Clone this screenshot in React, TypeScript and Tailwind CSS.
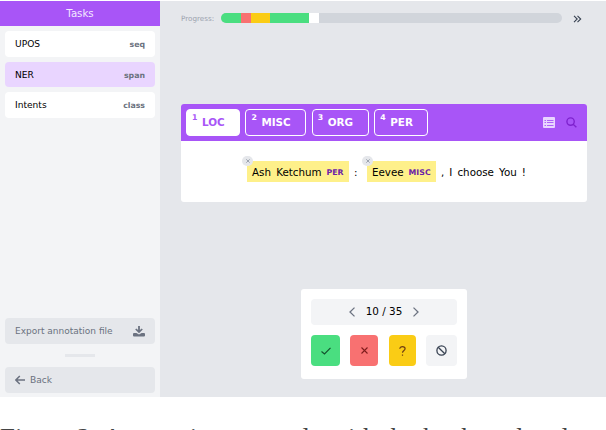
import React from "react";

const tasks = [
    { name: "UPOS", type: "seq", active: false },
    { name: "NER", type: "span", active: true },
    { name: "Intents", type: "class", active: false },
];

const labels = [
    { key: 1, name: "LOC", size: "w-[54px]", active: true },
    { key: 2, name: "MISC", size: "w-[61px]", active: false },
    { key: 3, name: "ORG", size: "w-[57px]", active: false },
    { key: 4, name: "PER", size: "w-[54px]", active: false },
];

function Sidebar() {
    return (
        <aside className="w-[160px] shrink-0 bg-[#f3f4f6] flex flex-col">
            <h1 className="h-[25px] bg-[#a855f7] text-[#f3e8ff] text-[10.2px] leading-[25px] text-center">Tasks</h1>
            <ul className="px-[5px] pt-[5px] flex flex-col gap-[5px]">
                {tasks.map((task) => (
                    <li
                        key={task.name}
                        className={`h-[25.6px] px-[10px] pt-[2px] rounded-[4px] flex items-center justify-between text-[9.1px] ${
                            task.active ? "bg-[#e9d5ff]" : "bg-white"
                        }`}
                    >
                        <span>{task.name}</span>
                        <span className="text-[7.8px] font-bold text-[#6b7280]">{task.type}</span>
                    </li>
                ))}
            </ul>
            <div className="mt-auto px-[5px] pb-[4px] flex flex-col items-center text-[9.1px] text-[#6b7280]">
                <button className="w-full h-[26px] px-[10px] rounded-[4px] bg-[#e5e7eb] flex items-center justify-between">
                    <span className="pt-[2px] text-[9px]">Export annotation file</span>
                    <svg className="w-[12px] h-[12px]" viewBox="0 0 12 12" fill="currentColor">
                        <path d="M5.1 1h1.8v4l1.8-1.5 1.1 1L6 8.2 2.2 4.5l1.1-1L5.1 5z" />
                        <path d="M1 8h2.4L6 9.6 8.6 8H11q1 0 1 1v1.5q0 1-1 1H1q-1 0-1-1V9q0-1 1-1z" />
                    </svg>
                </button>
                <div className="w-[30px] h-[3px] my-[10px] bg-[#e5e7eb]" />
                <button className="w-full h-[26px] px-[10px] rounded-[4px] bg-[#e5e7eb] flex items-center gap-[5px]">
                    <svg className="w-[10px] h-[10px]" viewBox="0 0 10 10" fill="none" stroke="currentColor" strokeWidth="1.5">
                        <path d="M4.8 1L.9 5l3.9 4M1 5h9" />
                    </svg>
                    <span className="pt-[2px]">Back</span>
                </button>
            </div>
        </aside>
    );
}

function Progress() {
    return (
        <div className="h-[34px] pl-[21px] flex items-center">
            <span className="w-[40px] pt-[2px] text-[7.2px] text-[#9ca3af]">Progress:</span>
            <div className="w-[341px] h-[10px] rounded-full overflow-hidden bg-[#d1d5db] flex">
                <div className="w-[20px] bg-[#4ade80]" />
                <div className="w-[10px] bg-[#f87171]" />
                <div className="w-[19px] bg-[#facc15]" />
                <div className="w-[39px] bg-[#4ade80]" />
                <div className="w-[10px] bg-white" />
            </div>
            <svg className="ml-[11px] mt-[1px] w-[9px] h-[8px] text-[#374151]" viewBox="0 0 9 8" fill="none" stroke="currentColor" strokeWidth="1.1">
                <path d="M1 .8L4.2 4 1 7.2M4.5.8L7.7 4 4.5 7.2" />
            </svg>
        </div>
    );
}

function LabelBar() {
    return (
        <div className="h-[37px] pl-[5px] pr-[10px] bg-[#a855f7] flex items-center text-white">
            <div className="flex gap-[5.4px]">
                {labels.map((label) => (
                    <button
                        key={label.name}
                        className={`h-[27px] pl-[5px] rounded-[4px] border border-white flex gap-[5px] font-bold ${label.size} ${
                            label.active ? "bg-white text-[#a855f7]" : ""
                        }`}
                    >
                        <span className="w-[5px] pt-[3px] text-[7.8px] leading-[10px]">{label.key}</span>
                        <span className="text-[10.4px] leading-[25px]">{label.name}</span>
                    </button>
                ))}
            </div>
            <svg className="ml-auto w-[12px] h-[11px] text-[#e9d5ff]" viewBox="0 0 12 11">
                <rect width="12" height="11" rx="1" fill="currentColor" />
                <path className="stroke-[#a855f7]" d="M1.5 3.5H3M4 3.5h6.5M1.5 5.5H3M4 5.5h6.5M1.5 8.5H3M4 8.5h6.5" strokeWidth=".9" />
            </svg>
            <svg className="ml-[11px] w-[11px] h-[11px] text-[#7e22ce]" viewBox="0 0 12 12" fill="none" stroke="currentColor" strokeWidth="1.5">
                <circle cx="5" cy="5" r="4" />
                <path d="M7.8 7.8L11.3 11.3" />
            </svg>
        </div>
    );
}

function Entity({ text, label, className }: { text: string; label: string; className: string }) {
    return (
        <span className={`relative h-[21px] pl-[5px] bg-[#fef08a] flex items-center gap-[5px] ${className}`}>
            <span className="pt-[2px]">{text}</span>
            <span className="pt-[2px] text-[7.8px] font-bold text-[#6b21a8]">{label}</span>
            <span className="absolute -left-[5px] -top-[5px] w-[11px] h-[10px] rounded-full bg-[#e5e7eb] text-[#9ca3af] flex items-center justify-center">
                <svg className="w-[4px] h-[4px]" viewBox="0 0 4 4" stroke="currentColor" strokeWidth="1">
                    <path d="M.3.3l3.4 3.4M3.7.3L.3 3.7" />
                </svg>
            </span>
        </span>
    );
}

function Annotator() {
    return (
        <section className="ml-[21px] mt-[69px] w-[406px] h-[98px] rounded-[3px] overflow-hidden bg-white">
            <LabelBar />
            <div className="h-[61px] pl-[66px] flex items-center text-[10.3px] whitespace-nowrap">
                <Entity text="Ash Ketchum" label="PER" className="w-[102px] [word-spacing:2px]" />
                <span className="w-[18px] pl-[5px] pt-[2px]">:</span>
                <Entity text="Eevee" label="MISC" className="w-[69px]" />
                <span className="pl-[5px] pt-[2px] [word-spacing:1.8px]">, I choose You !</span>
            </div>
        </section>
    );
}

function Controls() {
    return (
        <section className="ml-[141px] mt-[87px] w-[166px] h-[90px] p-[10px] rounded-[3px] bg-white">
            <div className="h-[26px] rounded-[4px] bg-[#f3f4f6] flex items-center justify-center gap-[11px] text-[10.4px] text-[#6b7280]">
                <svg className="w-[6px] h-[10px]" viewBox="0 0 6 10" fill="none" stroke="currentColor" strokeWidth="1.3">
                    <path d="M5.5.6L1 5l4.5 4.4" />
                </svg>
                <span className="text-black">10 / 35</span>
                <svg className="w-[6px] h-[10px]" viewBox="0 0 6 10" fill="none" stroke="currentColor" strokeWidth="1.3">
                    <path d="M.5.6L5 5 .5 9.4" />
                </svg>
            </div>
            <div className="mt-[10px] h-[31px] flex justify-between">
                <button className="w-[29px] rounded-[4px] bg-[#4ade80] text-[#14532d] flex items-center justify-center">
                    <svg className="w-[10px] h-[8px]" viewBox="0 0 10 8" fill="none" stroke="currentColor" strokeWidth="1.2">
                        <path d="M.5 4.5L3.5 7 9.5.8" />
                    </svg>
                </button>
                <button className="w-[28px] rounded-[4px] bg-[#f87171] text-[#7f1d1d] flex items-center justify-center">
                    <svg className="w-[7px] h-[7px]" viewBox="0 0 7 7" fill="none" stroke="currentColor" strokeWidth="1.1">
                        <path d="M.5.5l6 6M6.5.5l-6 6" />
                    </svg>
                </button>
                <button className="w-[27px] rounded-[4px] bg-[#facc15] text-[#713f12] flex items-center justify-center">
                    <svg className="w-[7px] h-[10px]" viewBox="0 0 7 10" fill="none" stroke="currentColor" strokeWidth="1.2">
                        <path d="M.8 2.8C.8 1.4 2 .7 3.4.7S6.1 1.4 6.1 2.8C6.1 4.5 3.5 4.4 3.5 6.8M3.5 8.4v1.3" />
                    </svg>
                </button>
                <button className="w-[31px] rounded-[4px] bg-[#f3f4f6] text-[#374151] flex items-center justify-center">
                    <svg className="w-[11px] h-[11px]" viewBox="0 0 11 11" fill="none" stroke="currentColor" strokeWidth="1.3">
                        <circle cx="5.5" cy="5.5" r="4.6" />
                        <path d="M2.2 2.2l6.6 6.6" />
                    </svg>
                </button>
            </div>
        </section>
    );
}

export default function App() {
    return (
        <div className="w-[606px] h-[430px] pt-[1px] overflow-hidden bg-white font-['DejaVu_Sans',sans-serif] text-black">
            <div className="h-[396px] flex">
                <Sidebar />
                <main className="w-[446px] bg-[#e5e7eb]">
                    <Progress />
                    <Annotator />
                    <Controls />
                </main>
            </div>
            <p className="mt-[26px] whitespace-nowrap font-['Liberation_Serif',serif] text-[26.9px] leading-[31px] text-[#444]">
                Figure 2: Annotation example with the keyboard and
            </p>
        </div>
    );
}
